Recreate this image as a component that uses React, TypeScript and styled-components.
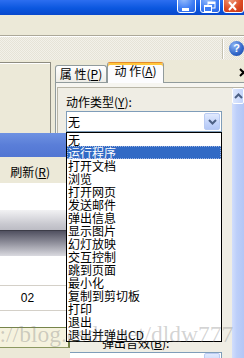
import React from "react";
import styled, { createGlobalStyle, css } from "styled-components";

const Global = createGlobalStyle`
  html, body { margin: 0; padding: 0; }
  body {
    width: 244px; height: 358px; overflow: hidden; background: #ECE9D8;
    font-family: "Noto Sans CJK SC", "Liberation Sans", sans-serif; font-size: 12px; color: #000;
  }
`;

const Screen = styled.div`
  position: relative;
  width: 244px;
  height: 358px;
  overflow: hidden;
  display: flex;
  flex-direction: column;
  background: #ECE9D8;
`;

const TitleBar = styled.div`
  flex: none;
  height: 15px;
  box-sizing: border-box;
  padding-bottom: 2px;
  background: linear-gradient(#2C6EF0, #0B57DF 55%, #0848CC);
  display: flex;
  justify-content: flex-end;
  align-items: flex-end;
  overflow: hidden;
`;

type Kind = "min" | "max" | "close";
const WinBtn = styled.div<{ $kind: Kind }>`
  flex: none;
  box-sizing: border-box;
  height: 21px;
  width: ${(p) => (p.$kind === "min" ? 19 : p.$kind === "max" ? 20 : 21)}px;
  margin-left: ${(p) => (p.$kind === "min" ? 0 : p.$kind === "max" ? 4 : 3)}px;
  border: 1px solid #fff;
  border-radius: 3px;
  background: ${(p) =>
    p.$kind === "close"
      ? "radial-gradient(circle at 35% 30%, #F0A080, #DD4A22 60%, #C2351A)"
      : "radial-gradient(circle at 35% 30%, #9CC0FC, #3D7CF4 60%, #2662E2)"};
  svg { display: block; }
`;

const MenuBar = styled.div`
  flex: none;
  height: 20px;
  background: #ECE9D8;
`;

const Rule = styled.div`
  flex: none;
  height: 2px;
  box-sizing: border-box;
  border-top: 1px solid #ACA899;
  background: #fff;
`;

const Toolbar = styled.div`
  flex: none;
  height: 23px;
  background-color: #F3F1EA;
  background-image: repeating-conic-gradient(#E6E3D7 0 25%, transparent 0 50%);
  background-size: 2px 2px;
  display: flex;
  justify-content: flex-end;
  align-items: center;
`;

const Separator = styled.div`
  width: 1px;
  height: 20px;
  background: #C5C2B2;
  border-right: 1px solid #fff;
  margin-right: 5px;
`;

const HelpIcon = styled.div`
  width: 15px;
  height: 15px;
  border-radius: 50%;
  background: radial-gradient(circle at 35% 30%, #8FB5F5, #2F64C8 60%, #1C449A);
  color: #fff;
  font: bold 11px/15px "Liberation Sans", sans-serif;
  text-align: center;
`;

const Main = styled.div`
  flex: 1;
  display: grid;
  grid-template-columns: 55px 1fr;
  grid-template-rows: 73px 1fr;
  min-height: 0;
`;

const UpperLeft = styled.div`
  grid-column: 1;
  grid-row: 1;
  padding-top: 2px;
`;

const SunkenBox = styled.div`
  box-sizing: border-box;
  width: 51px;
  height: 100%;
  border-top: 1px solid #8E8C80;
  border-right: 1px solid #8E8C80;
  box-shadow: inset 0 1px 0 #fff;
`;

const TabArea = styled.div`
  grid-column: 2;
  grid-row: 1 / 3;
  display: flex;
  flex-direction: column;
  padding-top: 2px;
  min-width: 0;
`;

const TabStrip = styled.div`
  flex: none;
  height: 20px;
  display: flex;
  align-items: flex-end;
  position: relative;
  z-index: 1;
`;

const Tab = styled.div<{ $active?: boolean }>`
  box-sizing: border-box;
  height: ${(p) => (p.$active ? 21 : 17)}px;
  width: ${(p) => (p.$active ? 57 : 52)}px;
  margin-bottom: ${(p) => (p.$active ? -1 : 0)}px;
  border: 1px solid #919B9C;
  border-bottom: none;
  border-radius: 3px 3px 0 0;
  background: linear-gradient(#FFFFFF, #EDECE6);
  display: flex;
  align-items: center;
  justify-content: center;
  font-size: 12px;
  line-height: 14px;
  white-space: nowrap;
  ${(p) =>
    p.$active &&
    css`
      border-top: 1px solid #E68B2C;
      box-shadow: inset 0 2px 0 #FFC73C;
      background: #FCFCFE;
      padding-bottom: 4px;
    `}
`;

const TabClose = styled.div`
  margin: 0 -4px 0 auto;
  align-self: center;
  width: 9px;
  height: 9px;
  svg { display: block; }
`;

const TabBody = styled.div`
  flex: 1;
  display: flex;
  min-height: 0;
  border-left: 1px solid #919B9C;
  border-top: 1px solid #919B9C;
  background: #F6F5F0;
  padding: 4px 0 0 1px;
`;

const Inner = styled.div`
  flex: 1;
  display: flex;
  min-width: 0;
  border-left: 1px solid #B8B5A6;
  border-top: 1px solid #B8B5A6;
  background: #EFEDE4;
`;

const Content = styled.div`
  flex: 1;
  min-width: 0;
  display: flex;
  flex-direction: column;
  padding: 7px 10px 0 8px;
`;

const FieldLabel = styled.div<{ $indent?: number }>`
  height: 14px;
  line-height: 14px;
  margin-bottom: 2px;
  padding-left: ${(p) => p.$indent ?? 0}px;
  white-space: nowrap;
`;

const ComboWrap = styled.div`
  position: relative;
  flex: none;
`;

const Combo = styled.div`
  box-sizing: border-box;
  height: 21px;
  border: 1px solid #7F9DB9;
  background: #fff;
  display: flex;
  align-items: center;
  padding: 0 1px 0 1px;
  line-height: 14px;
`;

const DropBtn = styled.div`
  margin-left: auto;
  box-sizing: border-box;
  width: 16px;
  height: 17px;
  border: 1px solid #B9CBF3;
  border-radius: 2px;
  background: linear-gradient(#E1EAFE, #C3D4FA 60%, #B4C8F6);
  display: flex;
  align-items: center;
  justify-content: center;
  svg { display: block; }
`;

const DropList = styled.div`
  position: absolute;
  top: 100%;
  left: 0;
  right: 0;
  z-index: 5;
  border: 1px solid #000;
  background: #fff;
`;

const Item = styled.div<{ $selected?: boolean }>`
  height: 13px;
  line-height: 13px;
  padding-left: 1px;
  white-space: nowrap;
  ${(p) =>
    p.$selected &&
    css`
      background: #316AC5;
      color: #fff;
      outline: 1px dotted #9DB3E0;
      outline-offset: -1px;
    `}
`;

const Hidden = styled.div`
  height: 204px;
  flex: none;
`;

const ScrollBar = styled.div`
  flex: none;
  width: 12px;
  display: flex;
  flex-direction: column;
  background: linear-gradient(90deg, #D2DEFC, #BDCFF9 40%, #B3C6F6);
`;

const ScrollUp = styled.div`
  flex: none;
  box-sizing: border-box;
  height: 16px;
  border: 1px solid #fff;
  border-radius: 2px;
  background: linear-gradient(90deg, #DCE6FD, #C4D5FB);
  display: flex;
  align-items: center;
  justify-content: center;
  svg { display: block; }
`;

const LowerLeft = styled.div`
  grid-column: 1;
  grid-row: 2;
  width: 70px;
  position: relative;
  z-index: 2;
  display: flex;
  flex-direction: column;
  background: #ECE9D8;
`;

const BlueBand = styled.div`
  flex: none;
  height: 24px;
  background: linear-gradient(#6F92E2, #5A7ED8 50%, #5276D2);
`;

const RefreshRow = styled.div`
  flex: none;
  height: 26px;
  box-sizing: border-box;
  padding: 3px 20px 0 0;
  display: flex;
  align-items: center;
  justify-content: flex-end;
  line-height: 14px;
`;

const GridArea = styled.div`
  flex: none;
  display: flex;
  flex-direction: column;
  background: #fff;
`;

const Blank = styled.div<{ $h: number; $line?: boolean }>`
  height: ${(p) => p.$h}px;
  border-bottom: ${(p) => (p.$line ? "1px solid #D4D0C8" : "none")};
`;

const LightBand = styled.div`
  height: 20px;
  background: linear-gradient(#F2F2F4, #C9C9D0 70%, #BCBCC4);
`;

const DarkBand = styled.div`
  height: 26px;
  box-sizing: border-box;
  border-top: 1px solid #3C3C48;
  background: linear-gradient(#505060, #8C8C98 45%, #DADAE0);
`;

const DataRow = styled.div`
  height: 24px;
  border-bottom: 1px solid #D4D0C8;
  display: flex;
  align-items: center;
`;

const Cell = styled.div`
  width: 55px;
  text-align: center;
  font-family: "Liberation Sans", "Noto Sans CJK SC", sans-serif;
  font-size: 12px;
`;

const OliveBox = styled.div`
  flex: none;
  height: 19px;
  border-top: 1px solid #76844A;
  border-right: 2px solid #76844A;
  border-bottom: 1px solid #8C9860;
  background: #F5F2DE;
`;

const Watermark = styled.div`
  position: absolute;
  left: -37px;
  top: 323px;
  z-index: 10;
  pointer-events: none;
  white-space: nowrap;
  font-family: "Liberation Serif", serif;
  font-size: 23.5px;
  line-height: 23px;
  color: rgba(120, 120, 120, 0.32);
`;

const items = [
  "无",
  "运行程序",
  "打开文档",
  "浏览",
  "打开网页",
  "发送邮件",
  "弹出信息",
  "显示图片",
  "幻灯放映",
  "交互控制",
  "跳到页面",
  "最小化",
  "复制到剪切板",
  "打印",
  "退出",
  "退出并弹出CD",
];

const Chevron = ({ up }: { up?: boolean }) => (
  <svg width="9" height="6" viewBox="0 0 9 6">
    <path
      d={up ? "M1 5 L4.5 1.5 L8 5" : "M1 1 L4.5 4.5 L8 1"}
      fill="none"
      stroke="#4D6185"
      strokeWidth="2"
    />
  </svg>
);

export default function App() {
  return (
    <>
      <Global />
      <Screen>
        <TitleBar>
          <WinBtn $kind="min">
            <svg width="17" height="19" viewBox="0 0 17 19">
              <rect x="4" y="15" width="7" height="3" fill="#fff" />
            </svg>
          </WinBtn>
          <WinBtn $kind="max">
            <svg width="18" height="19" viewBox="0 0 18 19">
              <rect x="7" y="9" width="7" height="6" fill="none" stroke="#fff" strokeWidth="1" />
              <rect x="7" y="9" width="7" height="2" fill="#fff" />
              <rect x="3.5" y="12.5" width="7" height="6" fill="#3D7CF4" stroke="#fff" strokeWidth="1" />
              <rect x="3" y="12" width="8" height="2" fill="#fff" />
            </svg>
          </WinBtn>
          <WinBtn $kind="close">
            <svg width="19" height="19" viewBox="0 0 19 19">
              <path d="M5 9 L12 17 M12 9 L5 17" stroke="#fff" strokeWidth="2" />
            </svg>
          </WinBtn>
        </TitleBar>
        <MenuBar />
        <Rule />
        <Toolbar>
          <Separator />
          <HelpIcon>?</HelpIcon>
        </Toolbar>
        <Main>
          <UpperLeft>
            <SunkenBox />
          </UpperLeft>
          <TabArea>
            <TabStrip>
              <Tab>
                属 性(<u>P</u>)
              </Tab>
              <Tab $active>
                动 作(<u>A</u>)
              </Tab>
              <TabClose>
                <svg width="9" height="9" viewBox="0 0 9 9">
                  <path d="M1 1 L8 8 M8 1 L1 8" stroke="#000" strokeWidth="2" />
                </svg>
              </TabClose>
            </TabStrip>
            <TabBody>
              <Inner>
                <Content>
                  <FieldLabel>
                    动作类型(<u>Y</u>):
                  </FieldLabel>
                  <ComboWrap>
                    <Combo>
                      无
                      <DropBtn>
                        <Chevron />
                      </DropBtn>
                    </Combo>
                    <DropList>
                      {items.map((t, i) => (
                        <Item key={t} $selected={i === 1}>
                          {t}
                        </Item>
                      ))}
                    </DropList>
                  </ComboWrap>
                  <Hidden />
                  <FieldLabel $indent={36}>
                    弹出音效(<u>B</u>):
                  </FieldLabel>
                  <Combo>
                    <DropBtn>
                      <Chevron />
                    </DropBtn>
                  </Combo>
                </Content>
                <ScrollBar>
                  <ScrollUp>
                    <Chevron up />
                  </ScrollUp>
                </ScrollBar>
              </Inner>
            </TabBody>
          </TabArea>
          <LowerLeft>
            <BlueBand />
            <RefreshRow>
              刷新(<u>R</u>)
            </RefreshRow>
            <GridArea>
              <Blank $h={27} />
              <LightBand />
              <DarkBand />
              <Blank $h={29} $line />
              <DataRow>
                <Cell>02</Cell>
              </DataRow>
              <Blank $h={16} />
            </GridArea>
            <OliveBox />
          </LowerLeft>
        </Main>
        <Watermark>http://blog.csdn.net/dldw777</Watermark>
      </Screen>
    </>
  );
}
